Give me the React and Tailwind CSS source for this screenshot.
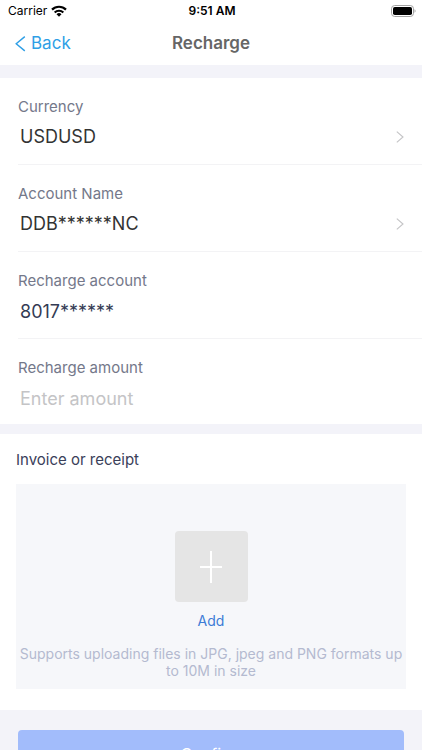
import React, { useState } from 'react';

const StatusBar = () => (
  <div className="grid grid-cols-3 items-center h-[22px] pl-2 pr-[6px] text-black">
    <div className="flex items-center gap-1 text-xs">
      Carrier
      <svg width="16" height="12" viewBox="0 0 16 12" fill="none" stroke="currentColor" strokeWidth="2.2" aria-hidden="true">
        <path d="M1 4.6a10 10 0 0 1 14 0" />
        <path d="M3.7 7.5a6.1 6.1 0 0 1 8.6 0" />
        <path d="M8 11.8 5.5 9.3a3.6 3.6 0 0 1 5 0z" fill="currentColor" stroke="none" />
      </svg>
    </div>
    <div className="text-center text-xs font-semibold">9:51 AM</div>
    <svg className="justify-self-end" width="25" height="12" viewBox="0 0 25 12" aria-hidden="true">
      <rect x="0.5" y="0.5" width="22" height="11" rx="3.2" fill="none" stroke="#a3a3a3" />
      <rect x="2" y="2" width="19" height="8" rx="1.8" fill="#000" />
      <path d="M23.6 4.2v3.6c1.2-.6 1.2-3 0-3.6z" fill="#8c8c8c" />
    </svg>
  </div>
);

const ChevronRight = () => (
  <svg className="shrink-0" width="8" height="12" viewBox="0 0 8 12" fill="none" stroke="#c4c4c6" strokeWidth="1.1" aria-hidden="true">
    <path d="M0.8 0.6 7 6 0.8 11.4" />
  </svg>
);

const Row = ({ label, htmlFor, last, children }) => (
  <div className={`ml-[18px] pt-[19px] pr-[18px] ${last ? 'pb-[6px]' : 'pb-[7px] border-b border-[#f3f3f5]'}`}>
    <label htmlFor={htmlFor} className="block text-[15px] leading-5 text-[#74788a]">
      {label}
    </label>
    {children}
  </div>
);

const PickerButton = ({ id, value }) => (
  <button id={id} type="button" className="flex items-center justify-between w-full h-10 pl-[2px] text-lg text-[#333333]">
    {value}
    <ChevronRight />
  </button>
);

const App = () => {
  const [account, setAccount] = useState('8017******');
  const [amount, setAmount] = useState('');

  return (
    <div className="flex flex-col h-screen bg-[#f3f3f9] font-['Inter','Liberation_Sans',sans-serif]">
      <header className="shrink-0 bg-white">
        <StatusBar />
        <nav className="grid grid-cols-3 items-center h-[43px] px-[15px]">
          <a href="#back" className="flex items-center gap-[5px] text-[17px] text-[#2f9fe6]">
            <svg width="11" height="16" viewBox="0 0 11 16" fill="none" stroke="currentColor" strokeWidth="1.4" aria-hidden="true">
              <path d="M9.800.6 1.200 7.700l8.600 7.200" />
            </svg>
            Back
          </a>
          <h1 className="text-center text-[17px] font-semibold text-[#666666]">Recharge</h1>
        </nav>
      </header>

      <form
        className="flex-1 overflow-y-auto [scrollbar-width:none] pt-[13px]"
        onSubmit={(e) => e.preventDefault()}
      >
        <div className="bg-white">
          <Row label="Currency" htmlFor="currency">
            <PickerButton id="currency" value="USDUSD" />
          </Row>
          <Row label="Account Name" htmlFor="accountName">
            <PickerButton id="accountName" value="DDB******NC" />
          </Row>
          <Row label="Recharge account" htmlFor="account">
            <input
              type="text"
              id="account"
              value={account}
              onChange={(e) => setAccount(e.target.value)}
              className="block w-full h-10 pl-[2px] text-lg text-[#343b54] outline-none"
            />
          </Row>
          <Row label="Recharge amount" htmlFor="amount" last>
            <input
              type="text"
              id="amount"
              inputMode="decimal"
              placeholder="Enter amount"
              value={amount}
              onChange={(e) => setAmount(e.target.value)}
              className="block w-full h-10 pl-[2px] text-lg text-[#343b54] placeholder:text-[#c4c4c6] outline-none"
            />
          </Row>
        </div>

        <section className="mt-[10px] px-4 pt-4 pb-[21px] bg-white">
          <h2 className="text-[15px] leading-5 text-[#3a4059]">Invoice or receipt</h2>
          <div className="flex flex-col items-center mt-[14px] pt-[47px] pb-[10px] bg-[#f6f7fa]">
            <button type="button" className="flex flex-col items-center text-sm leading-5 text-[#3d7cd6]">
              <span className="flex items-center justify-center w-[73px] h-[71px] mb-[9px] rounded-sm bg-[#e5e5e5]">
                <svg width="22" height="32" viewBox="0 0 22 32" stroke="#fff" strokeWidth="2" aria-hidden="true">
                  <path d="M11 0v32M0 16h22" />
                </svg>
              </span>
              Add
            </button>
            <p className="mt-[14px] text-center text-sm leading-[17px] text-[#b4bad0]">
              Supports uploading files in JPG, jpeg and PNG formats up to 10M in size
            </p>
          </div>
        </section>

        <div className="px-[18px] py-5">
          <button type="submit" className="w-full h-12 rounded-sm bg-[#a2bcfb] text-base text-white">
            Confirm
          </button>
        </div>
      </form>
    </div>
  );
};

export default App;
